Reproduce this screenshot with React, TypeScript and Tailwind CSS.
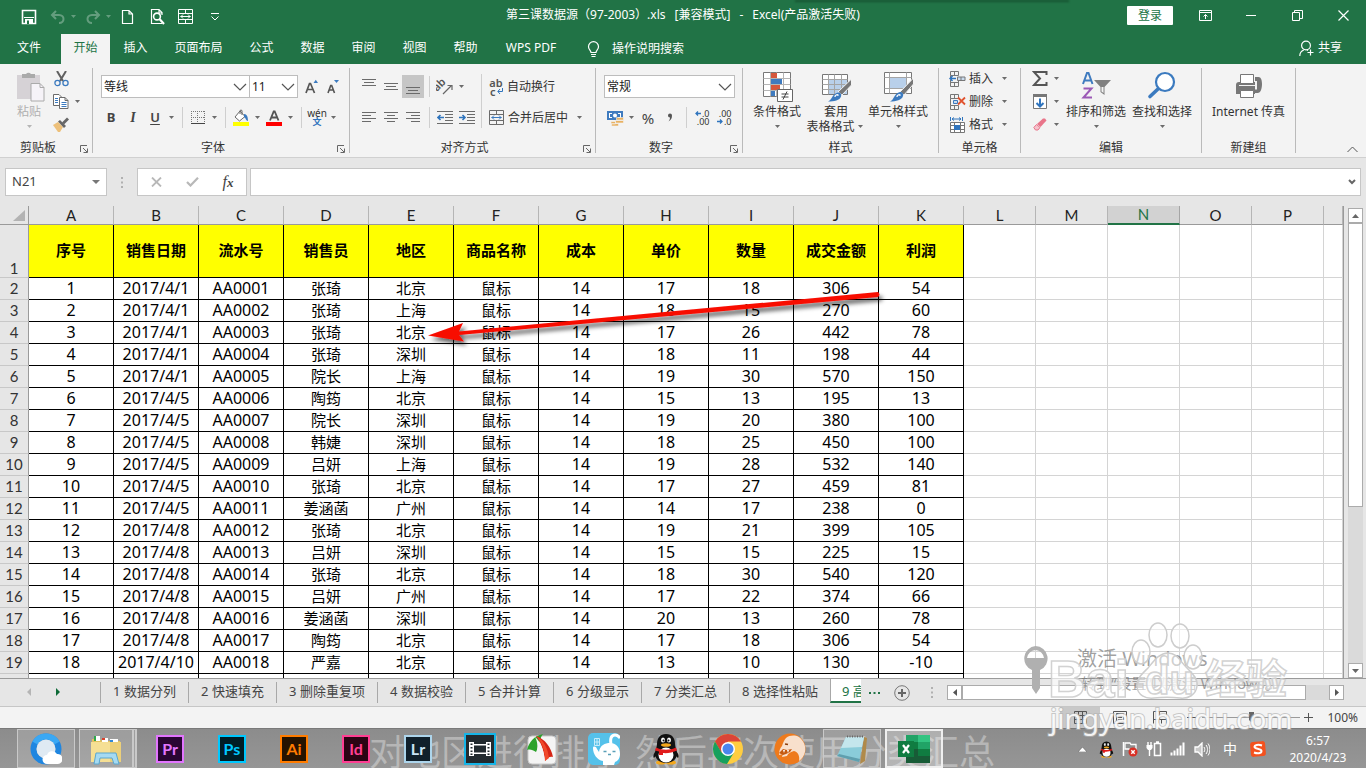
import React from "react";

type Kids = { children?: React.ReactNode };

/* ---------- helpers ---------- */

function Svg({ w, h, children, className = "" }: Kids & { w: number; h: number; className?: string }) {
  return (
    <svg width={w} height={h} viewBox={`0 0 ${w} ${h}`} fill="none" className={`shrink-0 ${className}`} aria-hidden="true">
      {children}
    </svg>
  );
}

function Caret({ light = false }: { light?: boolean }) {
  return (
    <span className="flex w-[11px] shrink-0 items-center justify-center">
      <Svg w={5} h={3}>
        <path d="M0 0h5L2.5 3z" fill={light ? "#b5b5b5" : "#6b6b6b"} />
      </Svg>
    </span>
  );
}

function Sep() {
  return (
    <span className="flex h-[21px] w-[10px] shrink-0 justify-center">
      <span className="w-px bg-[#cfcfcf]" />
    </span>
  );
}

function Cell({ label, active = false, children }: Kids & { label: string; active?: boolean }) {
  return (
    <button
      type="button"
      aria-label={label}
      className={
        active
          ? "flex h-[23px] w-[22px] shrink-0 items-center justify-center bg-[#c6c6c6]"
          : "flex h-[23px] w-[22px] shrink-0 items-center justify-center"
      }
    >
      {children}
    </button>
  );
}

function Combo({ label, value, className }: { label: string; value: string; className: string }) {
  return (
    <span className={`relative flex h-[23px] items-center border border-[#bdbdbd] bg-white ${className}`}>
      <select aria-label={label} className="h-full w-full appearance-none bg-transparent pl-[2px] text-xs text-[#222]">
        <option>{value}</option>
      </select>
      <Svg w={14} h={8} className="pointer-events-none absolute right-[2px]">
        <path d="M1 1l6 6 6-6" stroke="#555" strokeWidth="1.2" />
      </Svg>
    </span>
  );
}

function Group({ name, width, launcher = false, children }: Kids & { name: string; width: string; launcher?: boolean }) {
  return (
    <section aria-label={name} className={`flex shrink-0 ${width}`}>
      <div className="flex min-w-0 flex-1 flex-col">
        <div className="flex h-[74px]">{children}</div>
        <div className="flex h-[19px] items-center">
          <span className="flex-1 text-center">{name}</span>
          {launcher && (
            <button type="button" aria-label={`${name}设置`} className="flex w-4 items-center justify-center pt-[2px]">
              <Svg w={8} h={8}>
                <path d="M.5 7V.5H7M3 3l4 4M7.5 3.5v4h-4" stroke="#666" />
              </Svg>
            </button>
          )}
        </div>
      </div>
      <span className="my-1 w-px bg-[#bababa]" />
    </section>
  );
}

function BigButton({
  icon,
  line1,
  line2,
  caret = true,
  width,
  muted = false,
}: {
  icon: React.ReactNode;
  line1: string;
  line2?: string;
  caret?: boolean;
  width: string;
  muted?: boolean;
}) {
  return (
    <button type="button" className={`flex shrink-0 flex-col items-center whitespace-nowrap pt-[7px] ${width} ${muted ? "text-[#b0b0b0]" : ""}`}>
      <span className="flex h-[33px] items-start justify-center">{icon}</span>
      <span className="leading-[15px]">{line1}</span>
      <span className="flex h-[15px] items-center leading-[15px]">
        {line2}
        {caret && <Caret light={muted} />}
      </span>
    </button>
  );
}

/* ---------- ribbon icons ---------- */

const MergeIcon = ({ color = "#6b6b6b", arrow = "#3b7abf" }: { color?: string; arrow?: string }) => (
  <Svg w={15} h={15}>
    <path d="M.5.500h14v14H.5zM.5 4.500h14M.5 10.500h14M7.500.500v4M7.500 10.500v4" stroke={color} />
    <path d="M2.500 7.500h10M5 5.500l-2 2 2 2M10 5.500l2 2-2 2" stroke={arrow} />
  </Svg>
);

const Lines = ({ rows }: { rows: [number, number, number][] }) => (
  <Svg w={14} h={15}>
    {rows.map(([y, a, b]) => (
      <path key={y} d={`M${a} ${y + 0.5}H${b}`} stroke="#6b6b6b" />
    ))}
  </Svg>
);

const PasteIcon = () => (
  <Svg w={30} h={31} className="ml-1">
    <path d="M1 4h23v24H1z" fill="#d6d2d6" />
    <path d="M6 3h4a3 3 0 0 1 5 0h4v4H6z" fill="#aaa" />
    <path d="M15 12.500h9l4 4V30H15z" fill="#f6f3f8" stroke="#aaa" />
    <path d="M24 12.500v4h4" stroke="#aaa" />
  </Svg>
);

const CutIcon = () => (
  <Svg w={15} h={16}>
    <path d="M3 0l6 10M12 0L6 10" stroke="#606060" strokeWidth="2" />
    <circle cx="3.500" cy="12" r="2.600" stroke="#3b7abf" strokeWidth="1.300" />
    <circle cx="11.500" cy="12" r="2.600" stroke="#3b7abf" strokeWidth="1.300" />
  </Svg>
);

const CopyIcon = () => (
  <Svg w={16} h={15}>
    <path d="M.5.500h5.500L8.500 3v8.500H.5z" fill="#fff" stroke="#6b6b6b" />
    <path d="M6.500 3.500h5.500l3 3v8H6.500z" fill="#fff" stroke="#6b6b6b" />
    <path d="M12 3.500v3h3" stroke="#6b6b6b" />
    <path d="M2 4.500h3M2 6.500h3M2 8.500h3M8.500 8.500h5M8.500 10.500h5M8.500 12.500h5" stroke="#3b7abf" />
  </Svg>
);

const BrushIcon = () => (
  <Svg w={17} h={15}>
    <path d="M0 8l5-3 5 5-3 5H5z" fill="#edc07a" />
    <path d="M5 4.500l2-1.500 6 6-2 2z" fill="#666" />
    <path d="M9 5.500l5-5 2 2-5 5z" fill="#666" />
  </Svg>
);

const CondIcon = () => (
  <Svg w={31} h={31}>
    <path d="M1.500 1.500h27v24h-27z" fill="#fff" stroke="#777" />
    <path d="M8.500 1.500v24M14.500 1.500v24M21.500 1.500v24M1.500 7.500h27M1.500 13.500h27M1.500 19.500h27" stroke="#b5b5b5" />
    <path d="M9 2h6v5H9zM9 14h9v5H9z" fill="#d6573c" />
    <path d="M9 8h11v5H9zM9 20h4v5H9z" fill="#3f7bbf" />
    <path d="M15.500 18.500h15v12h-15z" fill="#fff" stroke="#666" />
    <path d="M19.500 23h7M19.500 26h7M25 20.500l-4 8" stroke="#444" />
  </Svg>
);

const TableFormatIcon = () => (
  <Svg w={31} h={31}>
    <path d="M1.500 3.500h25v20h-25z" fill="#fff" stroke="#777" />
    <path d="M8 9h18v14H8z" fill="#b9d0ea" />
    <path d="M7.500 3.500v20M13.500 3.500v20M20.500 3.500v20M1.500 8.500h25M1.500 13.500h25M1.500 18.500h25" stroke="#a5a5a5" />
    <path d="M30.500 8v6L21 24l-4-3z" fill="#777" stroke="#f3f3f3" />
    <path d="M17 21.500c2 0 4 1.500 3 4-1 4-7 5-13 5 4-1 4-8 10-9z" fill="#3b7abf" />
    <path d="M14 26a2 2 0 0 1 3.500-1.500" stroke="#fff" strokeWidth="1.300" />
  </Svg>
);

const CellStyleIcon = () => (
  <Svg w={31} h={31}>
    <path d="M1.500 1.500h27v21h-27z" fill="#fff" stroke="#777" />
    <path d="M7 7h16v11H7z" fill="#b9d0ea" />
    <path d="M6.500 1.500v21M23.500 1.500v21M1.500 6.500h27M1.500 17.500h27" stroke="#a5a5a5" />
    <path d="M30.500 7v6L21 24l-4-3z" fill="#777" stroke="#f3f3f3" />
    <path d="M17 21c2 0 4 1.500 3 4-1 4-7 5.500-13 5.500 4-1 4-8.500 10-9.500z" fill="#3b7abf" />
    <path d="M14 26a2 2 0 0 1 3.500-1.500" stroke="#fff" strokeWidth="1.300" />
  </Svg>
);

const InsertIcon = () => (
  <Svg w={17} h={16}>
    <path d="M1.500.500h8v4h-8zM5.500.500v4M1.500 11.500h8v4h-8zM5.500 11.500v4M1.500 4.500v3M1.500 9v3M9.500 9v3" stroke="#777" />
    <path d="M8.500 6h7.500v3.500H8.500zM12 6v3.500" fill="#c9dbee" stroke="#777" />
    <path d="M7 7.500H1M3.500 5L1 7.500 3.500 10" stroke="#2f74bd" strokeWidth="1.500" />
  </Svg>
);

const DeleteIcon = () => (
  <Svg w={17} h={16}>
    <path d="M1.500.500h8v4h-8zM5.500.500v4M1.500 11.500h8v4h-8zM5.500 11.500v4M1.500 4.500v7" stroke="#777" />
    <path d="M4.500 6.500h4v3h-4z" fill="#c9dbee" stroke="#3b7abf" />
    <path d="M9 3.500l7 7M16 3.500l-7 7" stroke="#e0532f" strokeWidth="1.800" />
  </Svg>
);

const FormatIcon = () => (
  <Svg w={17} h={16}>
    <path d="M1.500 0v4M13.500 0v4M3 2h9M5 .5L3 2l2 1.500M10 .5L12 2l-2 1.500" stroke="#2f74bd" />
    <path d="M1.500 5.500h14v10h-14zM5.500 5.500v10M11.500 5.500v10M1.500 8.500h14M1.500 12.500h14" fill="#fff" stroke="#777" />
    <path d="M5 8h6v5H5z" fill="#2f74bd" />
  </Svg>
);

const SigmaIcon = () => (
  <Svg w={16} h={15}>
    <path d="M14.500 4V1H2l6 6.500L2 14h12.500v-3" stroke="#555" strokeWidth="2" />
  </Svg>
);

const FillDownIcon = () => (
  <Svg w={14} h={15}>
    <path d="M.5.500h13v14H.5z" fill="#fff" stroke="#777" />
    <path d="M0 0h14v3H0z" fill="#777" />
    <path d="M7 4.500v8M3.500 9L7 12.500 10.500 9" stroke="#2f74bd" strokeWidth="2" />
  </Svg>
);

const EraserIcon = () => (
  <Svg w={14} h={13}>
    <path d="M4 6l6-5.500h2l1.500 2L7.500 9z" fill="#e9758a" />
    <path d="M3.500 6.500l3.500 3-2 2.500H2.500L.8 9.500z" fill="#f5c3cc" stroke="#e9758a" />
  </Svg>
);

const SortIcon = () => (
  <Svg w={31} h={31}>
    <path d="M2 13L6 2h1.500L11.500 13M3.500 9.500h6.500" stroke="#3f7bbf" strokeWidth="2" />
    <path d="M2.500 17.500h8L2.500 26.500h8.500" stroke="#9b59b6" strokeWidth="2" />
    <path d="M13 9h17l-6.500 7v8l-4-3v-5z" fill="#808080" />
    <path d="M20.500 16h2v6l-2-1.500z" fill="#f3f3f3" />
  </Svg>
);

const FindIcon = () => (
  <Svg w={30} h={31}>
    <path d="M11 18L3 25.500" stroke="#3b7abf" strokeWidth="3.600" strokeLinecap="round" />
    <circle cx="18" cy="11" r="9" fill="#fff" stroke="#3b7abf" strokeWidth="2.200" />
  </Svg>
);

const FaxIcon = () => (
  <Svg w={28} h={31}>
    <path d="M1 14c0-2 1-3 3-3h16v12H1z" fill="#777" />
    <path d="M5.500 3.500h13v9h-13z" fill="#fff" stroke="#777" />
    <path d="M4 14.500h17" stroke="#f3f3f3" />
    <path d="M5.500 19.500h13v7h-13z" fill="#fff" stroke="#777" />
    <path d="M20 6h3.500C26 6 27 9 27 13s-1 9-4.500 9H19v-3.500h3V10h-2z" fill="#777" />
  </Svg>
);

/* ---------- title bar ---------- */

function TitleBar() {
  return (
    <header className="grid h-[34px] grid-cols-[1fr_auto_1fr] items-center bg-[#217346] text-xs text-white">
      <div className="flex items-center pb-px pl-[21px]">
        <button type="button" aria-label="保存" className="w-[29px]">
          <Svg w={16} h={16}>
            <path d="M1.500 1.500h13v13h-13z" stroke="#fff" strokeWidth="1.600" />
            <path d="M3 8h10v1H3zM4 10h8v5H4z" fill="#fff" />
            <path d="M6 11.500h2V15H6z" fill="#217346" />
          </Svg>
        </button>
        <button type="button" aria-label="撤消" className="flex w-[35px] items-center gap-[5px] opacity-30">
          <Svg w={16} h={14}>
            <path d="M6 1L2 5l4 4M2 5h7c6 0 6 8 0 8" stroke="#fff" strokeWidth="2" />
          </Svg>
          <Svg w={5} h={3}><path d="M0 0h5L2.500 3z" fill="#fff" /></Svg>
        </button>
        <button type="button" aria-label="恢复" className="flex w-[36px] items-center gap-[5px] opacity-30">
          <Svg w={16} h={14}>
            <path d="M10 1l4 4-4 4M14 5H7c-6 0-6 8 0 8" stroke="#fff" strokeWidth="2" />
          </Svg>
          <Svg w={5} h={3}><path d="M0 0h5L2.500 3z" fill="#fff" /></Svg>
        </button>
        <button type="button" aria-label="新建" className="w-[29px]">
          <Svg w={13} h={16}>
            <path d="M1.500 1.500h6.500l3.500 3.500v9.500h-10zM8 1.500V5h3.500" stroke="#fff" strokeWidth="1.200" />
          </Svg>
        </button>
        <button type="button" aria-label="打印预览" className="w-[28px]">
          <Svg w={16} h={17}>
            <path d="M12 7V4.500L9 1.500H1.500v14H12M9 1.500V5h3" stroke="#fff" strokeWidth="1.200" />
            <circle cx="7" cy="8.500" r="3.400" stroke="#fff" strokeWidth="1.600" />
            <path d="M9.500 11l4.500 5" stroke="#fff" strokeWidth="2.200" />
          </Svg>
        </button>
        <button type="button" aria-label="合并后居中" className="w-[32px]">
          <MergeIcon color="#fff" arrow="#fff" />
        </button>
        <button type="button" aria-label="自定义快速访问工具栏">
          <Svg w={10} h={8}>
            <path d="M1 .5h8M1.500 3.500L5 7l3.500-3.500" stroke="#fff" />
          </Svg>
        </button>
      </div>
      <h1 className="flex gap-[9px] whitespace-nowrap pb-1 font-normal">
        <span>第三课数据源（97-2003）.xls</span>
        <span>[兼容模式]</span>
        <span>-</span>
        <span>Excel(产品激活失败)</span>
      </h1>
      <div className="flex items-center justify-end pb-[3px]">
        <button type="button" className="mr-[9px] h-[19px] w-[46px] rounded-[1px] bg-white leading-[19px] text-[#217346]">登录</button>
        <button type="button" aria-label="功能区显示选项" className="flex w-[46px] justify-center">
          <Svg w={13} h={11}>
            <path d="M.5.500h12v10H.5zM.5 2.500h12M6.500 9V4.500M4.500 6.500l2-2 2 2" stroke="#fff" />
          </Svg>
        </button>
        <button type="button" aria-label="最小化" className="flex w-[46px] justify-center">
          <Svg w={10} h={2}><path d="M0 .5h10" stroke="#fff" /></Svg>
        </button>
        <button type="button" aria-label="还原" className="flex w-[46px] justify-center">
          <Svg w={11} h={11}><path d="M.5 2.500h7v8h-7zM2.500 2.500v-2h8v8h-3" stroke="#fff" /></Svg>
        </button>
        <button type="button" aria-label="关闭" className="flex w-[46px] justify-center">
          <Svg w={11} h={11}><path d="M.5.500l10 10M10.500.500l-10 10" stroke="#fff" strokeWidth="1.200" /></Svg>
        </button>
      </div>
    </header>
  );
}

function RibbonTabs() {
  const tabs: [string, string][] = [
    ["插入", "w-[51px]"],
    ["页面布局", "w-[75px]"],
    ["公式", "w-[51px]"],
    ["数据", "w-[51px]"],
    ["审阅", "w-[51px]"],
    ["视图", "w-[51px]"],
    ["帮助", "w-[51px]"],
    ["WPS PDF", "w-[80px]"],
  ];
  return (
    <nav className="flex h-[30px] items-stretch bg-[#217346] text-xs text-white">
      <button type="button" className="mr-[3px] w-[58px] pb-[2px]">文件</button>
      <button type="button" className="w-[49px] bg-[#f3f3f3] pb-[2px] text-[#217346]">开始</button>
      {tabs.map(([t, w]) => (
        <button key={t} type="button" className={`${w} pb-[2px]`}>{t}</button>
      ))}
      <button type="button" className="ml-4 flex items-center gap-3">
        <Svg w={13} h={17}>
          <path d="M4 11.500C4 9.500 1.500 8.500 1.500 5.700a5 5 0 0 1 10 0c0 2.800-2.500 3.800-2.500 5.800zM4 13.500h5M4.500 15.500h4" stroke="#fff" strokeWidth="1.200" />
        </Svg>
        操作说明搜索
      </button>
      <button type="button" className="ml-auto mr-6 flex items-center gap-1 pb-[2px]">
        <Svg w={15} h={17}>
          <circle cx="7" cy="5.500" r="4.400" stroke="#fff" strokeWidth="1.200" />
          <path d="M.8 16c0-3 1.500-5 4-6M8 10l1 .5M11.500 9.500v6M8.500 12.500h6" stroke="#fff" strokeWidth="1.200" />
        </Svg>
        共享
      </button>
    </nav>
  );
}

/* ---------- ribbon ---------- */

function Ribbon() {
  return (
    <div className="flex h-[94px] border-b border-[#d0d0d0] bg-[#f3f3f3] text-xs text-[#333]">
      <Group name="剪贴板" width="w-[93px]" launcher>
        <div className="flex pl-[10px]">
          <BigButton width="w-[38px]" icon={<PasteIcon />} line1="粘贴" muted />
          <div className="flex flex-col pl-[2px] pt-[3px]">
            <Cell label="剪切"><CutIcon /></Cell>
            <span className="flex items-center">
              <Cell label="复制"><CopyIcon /></Cell>
              <Caret />
            </span>
            <Cell label="格式刷"><BrushIcon /></Cell>
          </div>
        </div>
      </Group>

      <Group name="字体" width="w-[257px]" launcher>
        <div className="flex flex-col gap-2 pl-[7px] pt-[11px]">
          <div className="flex items-center pl-px">
            <Combo label="字体" value="等线" className="w-[149px]" />
            <Combo label="字号" value="11" className="-ml-px w-[49px]" />
            <span className="w-[2px]" />
            <Cell label="增大字号">
              <Svg w={13} h={15}>
                <path d="M1 14L4.500 4.500h1L9.500 14M2.500 10.500h6" stroke="#555" strokeWidth="1.700" />
                <path d="M8.500 4h4.500L10.800.800z" fill="#3b7abf" />
              </Svg>
            </Cell>
            <Cell label="减小字号">
              <Svg w={12} h={15}>
                <path d="M1 14l2.700-7.500h1L7.500 14M2 11h5" stroke="#555" strokeWidth="1.600" />
                <path d="M7 1h5L9.500 4z" fill="#3b7abf" />
              </Svg>
            </Cell>
          </div>
          <div className="flex items-center">
            <Cell label="加粗"><b className="text-[13px] text-[#444]">B</b></Cell>
            <Cell label="倾斜"><i className="font-['Liberation_Serif',serif] text-sm font-bold text-[#444]">I</i></Cell>
            <Cell label="下划线"><u className="text-[13px] font-semibold text-[#444] underline-offset-2">U</u></Cell>
            <Caret />
            <Sep />
            <Cell label="边框">
              <Svg w={14} h={13}>
                <path d="M.5 0v13M6.500 0v13M13.500 0v13M0 .5h14M0 6.500h14" stroke="#777" strokeDasharray="1 1" />
                <path d="M0 12.500h14" stroke="#444" />
              </Svg>
            </Cell>
            <Caret />
            <Sep />
            <Cell label="填充颜色">
              <Svg w={16} h={17}>
                <path d="M7 2L2 8l4.500 4L12 7.500zM7 5V1.500a1.500 1.500 0 0 1 2 0V6" fill="#fff" stroke="#6b6b6b" />
                <path d="M11 5c3 0 4 3 4 7-2 0-2-3-4-4z" fill="#3b7abf" />
                <path d="M0 13h16v4H0z" fill="#ff0" />
              </Svg>
            </Cell>
            <Caret />
            <Cell label="字体颜色">
              <Svg w={16} h={17}>
                <path d="M4 11.500l3.700-9h1l3.800 9M5.500 8.500h5.500" stroke="#555" strokeWidth="1.800" />
                <path d="M0 13h16v4H0z" fill="#f00" />
              </Svg>
            </Cell>
            <Caret />
            <Sep />
            <Cell label="拼音指南">
              <span className="flex flex-col items-center text-[10px] leading-[8px]">
                <span>wén</span>
                <span className="text-[9px] font-bold leading-[9px] text-[#2f74bd]">文</span>
              </span>
            </Cell>
            <Caret />
          </div>
        </div>
      </Group>

      <Group name="对齐方式" width="w-[246px]" launcher>
        <div className="flex flex-col gap-2 pl-2 pt-[11px]">
          <div className="flex items-center">
            <Cell label="顶端对齐"><Lines rows={[[0, 0, 14], [3, 2, 12], [6, 0, 14]]} /></Cell>
            <Cell label="垂直居中"><Lines rows={[[4, 0, 14], [7, 2, 12], [10, 0, 14]]} /></Cell>
            <Cell label="底端对齐" active><Lines rows={[[8, 0, 14], [11, 2, 12], [14, 0, 14]]} /></Cell>
            <Sep />
            <Cell label="方向">
              <Svg w={18} h={17}>
                <text x="0" y="12" transform="rotate(-45 3 12)" fontSize="11" fontWeight="600" fill="#555" fontFamily="Noto Sans">ab</text>
                <path d="M7 16l8-8M11.500 7.500H16V12" stroke="#666" strokeWidth="1.200" />
              </Svg>
            </Cell>
            <Caret />
          </div>
          <div className="flex items-center">
            <Cell label="左对齐"><Lines rows={[[2, 0, 14], [5, 0, 9], [8, 0, 14], [11, 0, 9]]} /></Cell>
            <Cell label="居中"><Lines rows={[[2, 0, 14], [5, 3, 11], [8, 0, 14], [11, 3, 11]]} /></Cell>
            <Cell label="右对齐"><Lines rows={[[2, 0, 14], [5, 5, 14], [8, 0, 14], [11, 5, 14]]} /></Cell>
            <Sep />
            <Cell label="减少缩进量">
              <Svg w={16} h={13}>
                <path d="M0 .5h16M8 3.500h8M8 6.500h8M8 9.500h8M0 12.500h16" stroke="#6b6b6b" />
                <path d="M7 6.500H1M3.500 4L1 6.500 3.500 9" stroke="#2f74bd" strokeWidth="1.600" />
              </Svg>
            </Cell>
            <Cell label="增加缩进量">
              <Svg w={16} h={13}>
                <path d="M0 .5h16M8 3.500h8M8 6.500h8M8 9.500h8M0 12.500h16" stroke="#6b6b6b" />
                <path d="M0 6.500h6M3.500 4L6 6.500 3.500 9" stroke="#2f74bd" strokeWidth="1.600" />
              </Svg>
            </Cell>
          </div>
        </div>
        <span className="mx-[3px] mt-[10px] h-[54px] w-px bg-[#cfcfcf]" />
        <div className="flex flex-col gap-2 pl-1 pt-[11px]">
          <button type="button" className="flex h-[23px] items-center gap-1">
            <span className="flex w-[14px] flex-col text-[11px] font-semibold leading-[9px] text-[#555]">
              <span className="text-center">ab</span>
              <span className="flex items-center gap-px pl-px">
                c
                <Svg w={6} h={6}>
                  <path d="M5.500 0v3.500H1M3 1L.800 3.500 3 6" stroke="#2f74bd" />
                </Svg>
              </span>
            </span>
            自动换行
          </button>
          <button type="button" className="flex h-[23px] items-center gap-1">
            <MergeIcon />
            <span className="mr-[2px]">合并后居中</span>
            <Caret />
          </button>
        </div>
      </Group>

      <Group name="数字" width="w-[147px]" launcher>
        <div className="flex flex-1 flex-col gap-2 pl-2 pr-2 pt-[11px]">
          <Combo label="数字格式" value="常规" className="w-full" />
          <div className="flex items-center">
            <Cell label="会计数字格式">
              <Svg w={17} h={16}>
                <path d="M0 1h16v9H0z" fill="#3f7bbf" />
                <path d="M2 3h3v1H3v3h2v1H2zM14 3h-3v1h2v3h-2v1h3z" fill="#fff" />
                <circle cx="8" cy="5.500" r="2" fill="#fff" />
                <path d="M9.500 7.500h7V10h-7zM8.500 10.500h8V13h-8zM4 11.500h4.500V14H4zM4.500 13.500h7V16h-7z" fill="#e8b162" stroke="#f3f3f3" strokeWidth=".6" />
              </Svg>
            </Cell>
            <Caret />
            <Cell label="百分比样式"><span className="text-[15px] text-[#444]">%</span></Cell>
            <Cell label="千位分隔样式">
              <Svg w={6} h={9}><path d="M1 2.500a2 2 0 1 1 4 0c0 3-1 4.500-3.500 6 1-1.500 1.500-2.500 1.500-4C1.800 4.500 1 3.500 1 2.500z" fill="#555" /></Svg>
            </Cell>
            <Sep />
            <Cell label="增加小数位数">
              <span className="flex w-[15px] flex-col items-end text-[9px] leading-[8px] text-[#333]">
                <span className="flex items-center gap-px">
                  <Svg w={6} h={5}><path d="M6 2.500H1M3 .5l-2 2 2 2" stroke="#2f74bd" strokeWidth="1.300" /></Svg>
                  .0
                </span>
                <span>.00</span>
              </span>
            </Cell>
            <Cell label="减少小数位数">
              <span className="flex w-[15px] flex-col items-end text-[9px] leading-[8px] text-[#333]">
                <span>.00</span>
                <span className="flex items-center gap-px">
                  <Svg w={6} h={5}><path d="M0 2.500h5M3 .5l2 2-2 2" stroke="#2f74bd" strokeWidth="1.300" /></Svg>
                  .0
                </span>
              </span>
            </Cell>
          </div>
        </div>
      </Group>

      <Group name="样式" width="w-[196px]">
        <div className="flex pl-[5px]">
          <BigButton width="w-[58px]" icon={<CondIcon />} line1="条件格式" />
          <BigButton width="w-[60px]" icon={<TableFormatIcon />} line1="套用" line2="表格格式" />
          <BigButton width="w-[64px]" icon={<CellStyleIcon />} line1="单元格样式" />
        </div>
      </Group>

      <Group name="单元格" width="w-[82px]">
        <div className="flex flex-col pl-[10px] pt-[3px]">
          {[
            ["插入", <InsertIcon key="i" />],
            ["删除", <DeleteIcon key="d" />],
            ["格式", <FormatIcon key="f" />],
          ].map(([t, icon]) => (
            <button key={t as string} type="button" className="flex h-[23px] items-center gap-[3px]">
              {icon}
              <span className="mr-[3px]">{t}</span>
              <Caret />
            </button>
          ))}
        </div>
      </Group>

      <Group name="编辑" width="w-[181px]">
        <div className="flex flex-col pl-2 pt-[3px]">
          <span className="flex items-center"><Cell label="自动求和"><SigmaIcon /></Cell><Caret /></span>
          <span className="flex items-center"><Cell label="填充"><FillDownIcon /></Cell><Caret /></span>
          <span className="flex items-center"><Cell label="清除"><EraserIcon /></Cell><Caret /></span>
        </div>
        <BigButton width="w-[68px]" icon={<SortIcon />} line1="排序和筛选" />
        <BigButton width="w-[64px]" icon={<FindIcon />} line1="查找和选择" />
      </Group>

      <Group name="新建组" width="w-[94px]">
        <div className="flex flex-1 justify-center">
          <BigButton width="w-[80px]" icon={<FaxIcon />} line1="Internet 传真" caret={false} />
        </div>
      </Group>

      <button type="button" aria-label="折叠功能区" className="mb-1 ml-auto mr-2 self-end">
        <Svg w={11} h={7}><path d="M.5 6l5-5 5 5" stroke="#555" /></Svg>
      </button>
    </div>
  );
}

/* ---------- formula bar ---------- */

function FormulaBar() {
  return (
    <div className="flex h-12 items-start bg-[#e6e6e6] pl-[5px] pr-[5px] pt-[10px] text-xs text-[#444]">
      <div className="flex h-[28px] w-[102px] items-center border border-[#c6c6c6] bg-white pr-[6px]">
        <input aria-label="名称框" defaultValue="N21" className="min-w-0 flex-1 bg-transparent pl-[6px] text-[13px]" />
        <Svg w={8} h={4}><path d="M0 0h8L4 4z" fill="#777" /></Svg>
      </div>
      <span className="flex h-[28px] w-[30px] items-center justify-center">
        <Svg w={2} h={11}><path d="M0 0h2v2H0zM0 4.500h2v2H0zM0 9h2v2H0z" fill="#b0b0b0" /></Svg>
      </span>
      <div className="flex h-[28px] w-[110px] items-center border border-[#c6c6c6] bg-white">
        <button type="button" aria-label="取消" className="flex flex-1 justify-center">
          <Svg w={11} h={10}><path d="M1 .5l9 9M10 .5l-9 9" stroke="#b8b8b8" strokeWidth="1.800" /></Svg>
        </button>
        <button type="button" aria-label="输入" className="flex flex-1 justify-center">
          <Svg w={13} h={10}><path d="M1 5l3.500 3.500L12 .8" stroke="#b8b8b8" strokeWidth="2.200" /></Svg>
        </button>
        <button type="button" aria-label="插入函数" className="flex-1 font-['Liberation_Serif',serif] text-base italic leading-none text-[#444]">
          f<span className="text-[13px] font-bold">x</span>
        </button>
      </div>
      <div className="ml-[3px] flex h-[28px] flex-1 items-center border border-[#c6c6c6] bg-white pr-1">
        <input aria-label="编辑栏" className="min-w-0 flex-1 bg-transparent px-2" />
        <Svg w={8} h={6}><path d="M1 1l3 3 3-3" stroke="#666" strokeWidth="2" /></Svg>
      </div>
    </div>
  );
}

/* ---------- worksheet ---------- */

const dataCols = ["A", "B", "C", "D", "E", "F", "G", "H", "I", "J", "K"];
const restCols = ["L", "M", "N", "O", "P", ""];
const heads = ["序号", "销售日期", "流水号", "销售员", "地区", "商品名称", "成本", "单价", "数量", "成交金额", "利润"];

const records: [string, string, string, number, number, number, number][] = [
  ["2017/4/1", "张琦", "北京", 17, 18, 306, 54],
  ["2017/4/1", "张琦", "上海", 18, 15, 270, 60],
  ["2017/4/1", "张琦", "北京", 17, 26, 442, 78],
  ["2017/4/1", "张琦", "深圳", 18, 11, 198, 44],
  ["2017/4/1", "院长", "上海", 19, 30, 570, 150],
  ["2017/4/5", "陶筠", "北京", 15, 13, 195, 13],
  ["2017/4/5", "院长", "深圳", 19, 20, 380, 100],
  ["2017/4/5", "韩婕", "深圳", 18, 25, 450, 100],
  ["2017/4/5", "吕妍", "上海", 19, 28, 532, 140],
  ["2017/4/5", "张琦", "北京", 17, 27, 459, 81],
  ["2017/4/5", "姜涵菡", "广州", 14, 17, 238, 0],
  ["2017/4/8", "张琦", "北京", 19, 21, 399, 105],
  ["2017/4/8", "吕妍", "深圳", 15, 15, 225, 15],
  ["2017/4/8", "张琦", "北京", 18, 30, 540, 120],
  ["2017/4/8", "吕妍", "广州", 17, 22, 374, 66],
  ["2017/4/8", "姜涵菡", "深圳", 20, 13, 260, 78],
  ["2017/4/8", "陶筠", "北京", 17, 18, 306, 54],
  ["2017/4/10", "严嘉", "北京", 13, 10, 130, -10],
];

const rowHead = "border-b border-r border-b-[#c8c8c8] border-r-[#9a9a9a] bg-[#e6e6e6] p-0 text-center font-['Lato',sans-serif] font-normal text-[#333]";
const blank = "border-b border-r border-[#d4d4d4] bg-white p-0";

function Num({ v }: { v: string | number }) {
  return <td className="whitespace-nowrap border-b border-r border-black bg-white p-0 text-center text-base leading-[21px]">{v}</td>;
}
function Txt({ v }: { v: string }) {
  return <td className="border-b border-r border-black bg-white p-0 text-center leading-[21px]">{v}</td>;
}

function Sheet() {
  return (
    <div className="flex min-h-0 flex-1 bg-[#e6e6e6]">
      <div className="relative min-w-0 flex-1 overflow-hidden border-r border-[#9a9a9a]">
        <table className="w-full table-fixed border-separate border-spacing-0 text-[15px] text-black">
          <colgroup>
            <col className="w-[29px]" />
            {dataCols.map((c) => <col key={c} className="w-[85px]" />)}
            {restCols.slice(0, 5).map((c) => <col key={c} className="w-[72px]" />)}
            <col />
          </colgroup>
          <thead>
            <tr className="h-[19px] font-['Lato',sans-serif] text-[#222]">
              <th className="border-b border-r border-[#9a9a9a] bg-[#e6e6e6] p-0" aria-label="全选">
                <Svg w={12} h={11} className="ml-auto mr-[3px]"><path d="M12 0v11H0z" fill="#b3b3b3" /></Svg>
              </th>
              {[...dataCols, ...restCols].map((c) => (
                <th
                  key={c}
                  scope="col"
                  className={
                    c === "N"
                      ? "border-b-2 border-r border-b-[#217346] border-r-[#a5a5a5] bg-[#d2d2d2] p-0 font-normal leading-[17px] text-[#217346]"
                      : "border-b border-r border-b-[#9a9a9a] border-r-[#b5b5b5] bg-[#e6e6e6] p-0 font-normal leading-[18px]"
                  }
                >
                  {c}
                </th>
              ))}
            </tr>
          </thead>
          <tbody>
            <tr className="h-[53px]">
              <th scope="row" className={`${rowHead} align-bottom leading-[17px]`}>1</th>
              {heads.map((h) => (
                <td key={h} className="border-b border-r border-black bg-[#ffff00] p-0 pb-[2px] text-center font-bold">{h}</td>
              ))}
              {restCols.map((c) => <td key={c} className={blank} />)}
            </tr>
            {records.map(([date, who, area, price, qty, total, profit], i) => (
              <tr key={i} className="h-[22px]">
                <th scope="row" className={`${rowHead} leading-[21px]`}>{i + 2}</th>
                <Num v={i + 1} />
                <Num v={date} />
                <Num v={`AA${String(i + 1).padStart(4, "0")}`} />
                <Txt v={who} />
                <Txt v={area} />
                <Txt v="鼠标" />
                <Num v={14} />
                <Num v={price} />
                <Num v={qty} />
                <Num v={total} />
                <Num v={profit} />
                {restCols.map((c) => <td key={c} className={blank} />)}
              </tr>
            ))}
            <tr className="h-[22px]">
              <th scope="row" aria-label="20" className={rowHead} />
              {dataCols.map((c) => <td key={c} className="border-b border-r border-black bg-white p-0" />)}
              {restCols.map((c) => <td key={c} className={blank} />)}
            </tr>
          </tbody>
        </table>
        <svg width="480" height="70" viewBox="420 280 480 70" className="pointer-events-none absolute left-[420px] top-[74px]" aria-hidden="true">
          <defs>
            <filter id="drop" x="-5%" y="-30%" width="112%" height="180%">
              <feDropShadow dx="3" dy="4" stdDeviation="2" floodColor="#000" floodOpacity="0.6" />
            </filter>
          </defs>
          <path d="M428 335.500L463 323l-4 8.500L878 292q3 2.500 0 5L459 335l5 6.500z" fill="#f80a06" filter="url(#drop)" />
        </svg>
      </div>
      <div className="flex w-[22px] flex-col items-stretch pl-[4px] pr-[3px] pt-[2px]">
        <button type="button" aria-label="向上滚动" className="flex h-[15px] items-center justify-center border border-[#ababab] bg-white">
          <Svg w={7} h={4}><path d="M0 4h7L3.500 0z" fill="#666" /></Svg>
        </button>
        <div className="flex-[284] border border-[#ababab] bg-white" />
        <div className="flex-[157] bg-[#dadada]" />
        <button type="button" aria-label="向下滚动" className="flex h-[15px] items-center justify-center border border-[#ababab] bg-white">
          <Svg w={7} h={4}><path d="M0 0h7L3.500 4z" fill="#666" /></Svg>
        </button>
      </div>
    </div>
  );
}

function SheetTabs() {
  const tabs: [string, string][] = [
    ["1 数据分列", "w-[88px]"],
    ["2 快速填充", "w-[88px]"],
    ["3 删除重复项", "w-[101px]"],
    ["4 数据校验", "w-[88px]"],
    ["5 合并计算", "w-[88px]"],
    ["6 分级显示", "w-[88px]"],
    ["7 分类汇总", "w-[88px]"],
    ["8 选择性粘贴", "w-[101px]"],
  ];
  return (
    <div className="flex h-[29px] border-b border-t border-b-[#c6c6c6] border-t-[#9a9a9a] bg-[#e6e6e6] text-[13px] text-[#444]">
      <div className="flex w-[100px] items-center gap-[25px] pb-[2px] pl-[27px]">
        <button type="button" aria-label="上一个工作表"><Svg w={4} h={8}><path d="M4 0v8L0 4z" fill="#b5b5b5" /></Svg></button>
        <button type="button" aria-label="下一个工作表"><Svg w={4} h={8}><path d="M0 0v8l4-4z" fill="#0e6b38" /></Svg></button>
      </div>
      {tabs.map(([t, w]) => (
        <button key={t} type="button" className={`${w} my-[3px] flex shrink-0 items-start justify-center whitespace-nowrap border-l border-[#a8a8a8] leading-[18px]`}>{t}</button>
      ))}
      <button type="button" className="mb-[3px] flex w-[31px] shrink-0 overflow-hidden whitespace-nowrap border-b-2 border-l border-b-[#217346] border-l-[#a8a8a8] bg-white pl-[11px] pt-[3px] leading-[18px] text-[#217346]">
        9 高级筛选
      </button>
      <button type="button" aria-label="更多工作表" className="flex w-[27px] items-center justify-center">
        <Svg w={11} h={2}><path d="M0 0h2v2H0zM4.500 0h2v2h-2zM9 0h2v2H9z" fill="#217346" /></Svg>
      </button>
      <button type="button" aria-label="新工作表" className="flex w-[28px] items-center justify-center">
        <Svg w={16} h={16}>
          <circle cx="8" cy="8" r="7.300" stroke="#777" />
          <path d="M4 8h8M8 4v8" stroke="#666" strokeWidth="2" />
        </Svg>
      </button>
      <span className="flex w-[31px] items-center justify-center">
        <Svg w={2} h={11}><path d="M0 0h2v2H0zM0 4.500h2v2H0zM0 9h2v2H0z" fill="#b0b0b0" /></Svg>
      </span>
      <div className="mr-[22px] mt-[6px] flex h-[15px] flex-1">
        <button type="button" aria-label="向左滚动" className="flex w-[15px] items-center justify-center border border-[#ababab] bg-white">
          <Svg w={4} h={7}><path d="M4 0v7L0 3.500z" fill="#555" /></Svg>
        </button>
        <div className="flex-[344] border border-[#ababab] bg-white" />
        <div className="flex-[23] bg-[#dadada]" />
        <button type="button" aria-label="向右滚动" className="flex w-[15px] items-center justify-center border border-[#ababab] bg-white">
          <Svg w={4} h={7}><path d="M0 0v7l4-3.500z" fill="#555" /></Svg>
        </button>
      </div>
    </div>
  );
}

function StatusBar() {
  return (
    <div className="flex h-[21px] items-center justify-end bg-[#f3f3f3] pr-2 text-xs text-[#444]">
      <button type="button" aria-label="普通" className="flex h-full w-10 items-center justify-center bg-[#c8c8c8]">
        <Svg w={13} h={13}><path d="M.5.500h12v12H.5zM4.500.500v12M8.500.500v12M.5 4.500h12M.5 8.500h12" stroke="#555" /></Svg>
      </button>
      <button type="button" aria-label="页面布局" className="flex w-10 items-center justify-center">
        <Svg w={14} h={13}><path d="M.5.500h13v12H.5zM3.500 2.500h7v8h-7zM5 4.500h4M5 6.500h4M5 8.500h4" stroke="#555" /></Svg>
      </button>
      <button type="button" aria-label="分页预览" className="flex w-10 items-center justify-center">
        <Svg w={14} h={13}><path d="M.5.500h6v8h-6zM6.500.500h7v8h-7zM.5 8v4.500M13.500 8v4.500M5.500 12.500v-4M8.500 12.500v-4" stroke="#555" /></Svg>
      </button>
      <button type="button" aria-label="缩小" className="flex w-[22px] items-center justify-center">
        <Svg w={9} h={1}><path d="M0 .5h9" stroke="#555" /></Svg>
      </button>
      <Svg w={98} h={13}>
        <path d="M0 6.500h98" stroke="#9a9a9a" />
        <path d="M47 1h5v8l-2.500 2.500L47 9z" fill="#666" />
      </Svg>
      <button type="button" aria-label="放大" className="flex w-[17px] items-center justify-center">
        <Svg w={9} h={9}><path d="M0 4.500h9M4.500 0v9" stroke="#555" /></Svg>
      </button>
      <span className="ml-[10px]">100%</span>
    </div>
  );
}

/* ---------- taskbar ---------- */

function Adobe({ label, box }: { label: string; box: string }) {
  return (
    <span className={`flex h-[28px] w-[28px] items-center justify-center border-2 font-['Lato',sans-serif] text-base font-bold leading-none ${box}`}>
      {label}
    </span>
  );
}

function Penguin({ size }: { size: number }) {
  return (
    <svg width={size} height={size} viewBox="0 0 32 32" aria-hidden="true">
      <path d="M6 18c-3 3-3 6-2 7l3-3zM26 18c3 3 3 6 2 7l-3-3z" fill="#111" />
      <ellipse cx="11" cy="29.500" rx="5" ry="2" fill="#f4a81d" />
      <ellipse cx="21" cy="29.500" rx="5" ry="2" fill="#f4a81d" />
      <path d="M16 1c-6 0-9 4-9 10 0 3-2 6-2 10 0 5 5 9 11 9s11-4 11-9c0-4-2-7-2-10 0-6-3-10-9-10z" fill="#111" />
      <ellipse cx="16" cy="22" rx="7.500" ry="7.500" fill="#fff" />
      <ellipse cx="13" cy="7" rx="2" ry="2.600" fill="#fff" />
      <ellipse cx="19" cy="7" rx="2" ry="2.600" fill="#fff" />
      <circle cx="13.500" cy="7.500" r="1" fill="#111" />
      <circle cx="18.500" cy="7.500" r="1" fill="#111" />
      <ellipse cx="16" cy="12" rx="5" ry="1.800" fill="#f4a81d" />
      <path d="M6 14.500c6 3 14 3 20 0l1 3c-4 2-10 3-14 2.500V22H9v-3.500L5 17.500z" fill="#e11b1b" />
    </svg>
  );
}

function TaskButton({ label, state = "idle", children }: Kids & { label: string; state?: "idle" | "open" | "stack" | "active" }) {
  const look = {
    idle: "border border-transparent",
    open: "border border-[#c9c9c9] bg-white/15",
    stack: "border border-r-[5px] border-double border-[#c9c9c9] bg-white/15",
    active: "border-2 border-[#efefef] bg-white/30",
  }[state];
  return (
    <button type="button" aria-label={label} className={`flex h-[39px] w-[58px] shrink-0 items-center justify-center ${look}`}>
      {children}
    </button>
  );
}

function Taskbar() {
  return (
    <footer className="relative flex h-10 items-start justify-between overflow-hidden border-t border-[#7a7a7a] bg-linear-to-b from-[#8c8c8c] to-[#969696] pl-[17px]">
      <p className="pointer-events-none absolute left-[369px] top-0 flex gap-[14px] whitespace-nowrap text-[36px] leading-[48px] text-white/35">
        <span>对地区进行排序</span>
        <span>然后再次使用分类汇总</span>
      </p>
      <div className="relative flex gap-1">
        <TaskButton label="QQ浏览器" state="open">
          <Svg w={32} h={32}>
            <circle cx="16" cy="16" r="12.500" stroke="#1f86e0" strokeWidth="6" />
            <path d="M5 10A12.500 12.500 0 0 1 27 10" stroke="#3aa8f4" strokeWidth="6" />
            <circle cx="16" cy="16" r="9.500" fill="#dfeaf3" />
            <path d="M17 31a4.500 4.500 0 0 1 0-9 5.500 5.500 0 0 1 10-1 5 5 0 0 1 1 10z" fill="#fff" />
          </Svg>
        </TaskButton>
        <TaskButton label="资源管理器" state="stack">
          <Svg w={32} h={32}>
            <path d="M2 6h8l2 2h18v20H2z" fill="#e3c25d" />
            <path d="M4 3h6v5H4z" fill="#2fa84c" />
            <path d="M6 3h4v5H6z" fill="#fff" />
            <path d="M12 5h6v4h-6z" fill="#fff" />
            <path d="M12 5h3v2h-3z" fill="#d9402c" />
            <path d="M20 6h8v3h-8z" fill="#fff" />
            <path d="M20 7h3v2h-3z" fill="#3287d6" />
            <path d="M1 9h30v20H1z" fill="#f5df94" />
            <path d="M20 9h11v20H20z" fill="#ecd07a" />
            <path d="M6 20h20l3 11h-5l-2-6H10l-1 6H4z" fill="#a5daf2" stroke="#5aa7cf" />
          </Svg>
        </TaskButton>
        <TaskButton label="Premiere"><Adobe label="Pr" box="border-[#e276ff] bg-[#2a0634] text-[#e276ff]" /></TaskButton>
        <TaskButton label="Photoshop"><Adobe label="Ps" box="border-[#00c8ff] bg-[#001d26] text-[#00c8ff]" /></TaskButton>
        <TaskButton label="Illustrator"><Adobe label="Ai" box="border-[#ff7c00] bg-[#261300] text-[#ff7c00]" /></TaskButton>
        <TaskButton label="InDesign"><Adobe label="Id" box="border-[#ff3f93] bg-[#2b0414] text-[#ff3f93]" /></TaskButton>
        <TaskButton label="Lightroom"><Adobe label="Lr" box="border-[#add5ec] bg-[#10202b] text-[#c9e4f5]" /></TaskButton>
        <TaskButton label="视频工具">
          <Svg w={32} h={32}>
            <path d="M1 1h30v30H1z" fill="#222a2f" stroke="#16b5e8" strokeWidth="2" />
            <path d="M5 9h5v14H5zM22 9h5v14h-5zM10 11h12v1.500H10zM10 19.500h12V21H10z" fill="#fff" />
            <path d="M6.500 10.500h2v1.500h-2zM6.500 14h2v1.500h-2zM6.500 17.500h2V19h-2zM6.500 20.500h2V22h-2zM23.500 10.500h2v1.500h-2zM23.500 14h2v1.500h-2zM23.500 17.500h2V19h-2zM23.500 20.500h2V22h-2z" fill="#222a2f" />
          </Svg>
        </TaskButton>
        <TaskButton label="录屏软件">
          <Svg w={32} h={32}>
            <rect x="2" y="3" width="28" height="28" rx="4" fill="#f4f4f4" stroke="#c9c9c9" />
            <path d="M1 17C3 9 8 3 17 1c-3 3-4 12-7 18-3-2-6-3-9-2z" fill="#2ba32a" />
            <path d="M10 3c9 3 15 11 17 21-3-1-6 1-8 4-1-10-4-19-9-25z" fill="#d62516" />
            <path d="M9 4c6 5 9 14 10 24-2-3-5-5-9-5 2-7 2-14-1-19z" fill="#f4f4f4" />
            <path d="M10 3c6 6 9 15 9 25l4-3C22 16 18 7 10 3z" fill="#f0492b" />
          </Svg>
        </TaskButton>
        <TaskButton label="云盘">
          <Svg w={32} h={32}>
            <rect width="32" height="32" rx="5" fill="#55c1ea" />
            <path d="M23 11c-1-5 0-9 4-9 3 0 4 2 5 3" stroke="#fff" strokeWidth="3" />
            <path d="M6.500 5.500h5v7h-5zM6.500 9h5M9 5.500v7" stroke="#c7ecf9" />
            <path d="M5 15c0-2 3-2 4 1l2 3c1-7 6-9 11-9 6 0 10 4 10 11 0 4-2 7-5 8l-1 3H15v-4C9 27 5 21 5 15z" fill="#fff" />
            <path d="M15.500 18.500h3M24.500 18.500h3M20 21.500h3" stroke="#5a9fb8" strokeWidth="1.300" />
          </Svg>
        </TaskButton>
        <TaskButton label="QQ"><Penguin size={32} /></TaskButton>
        <TaskButton label="Chrome">
          <Svg w={32} h={32}>
            <circle cx="16" cy="16" r="15" fill="#ffcd41" />
            <path d="M3 8.500A15 15 0 0 1 29 8.500H16L9.500 20z" fill="#db4437" />
            <path d="M3 8.500A15 15 0 0 0 15 31l7-11.500H9.500z" fill="#17a05e" />
            <circle cx="16" cy="16" r="7" fill="#fff" />
            <circle cx="16" cy="16" r="5.500" fill="#4a86ee" />
          </Svg>
        </TaskButton>
        <TaskButton label="猎豹浏览器">
          <Svg w={32} h={32}>
            <circle cx="16" cy="16" r="15.500" fill="#ee7a1c" />
            <path d="M12 5c4-3 9-3 13-1 5 4 7 9 6 15-1 4-3 7-6 9 1-5-1-9-5-10-3 1-6 2-7 5l-5 1 1-3-4 1c0-4 1-7 3-9 1-3 2-6 4-8z" fill="#f8e0cc" />
            <path d="M5 20l4-4 4 1 5-1-2 3-4 2-3 1z" fill="#c55a10" />
            <path d="M9 17l1 3 1-3zM13 17l1 3 1-3z" fill="#fff" />
            <path d="M11 11l3 .5" stroke="#8c3c08" strokeWidth="1.500" />
          </Svg>
        </TaskButton>
        <TaskButton label="记事本" state="open">
          <Svg w={32} h={32}>
            <path d="M28 4l3 1-2 23-5 3z" fill="#b08a4a" />
            <path d="M10 4h18l-5 25L1 23z" fill="#8accd9" />
            <path d="M10 4h18l-2 10L5 15z" fill="#c4e6ec" />
            <path d="M1 23l22 6 1-3L3 21z" fill="#5f9fae" />
            <path d="M11 3.500h17" stroke="#666" strokeWidth="2" strokeDasharray="1 1.500" />
          </Svg>
        </TaskButton>
        <TaskButton label="Excel" state="active">
          <Svg w={32} h={30}>
            <path d="M8 1h24v28H8z" fill="#21a366" />
            <path d="M20 1h12v7H20z" fill="#33c481" />
            <path d="M8 8h12v7H8z" fill="#107c41" />
            <path d="M8 15h12v14H8z" fill="#185c37" />
            <path d="M20 15h12v7H20z" fill="#107c41" />
            <path d="M20 22h12v7H20z" fill="#185c37" />
            <path d="M0 7h16v16H0z" fill="#107c41" />
            <path d="M5 11l6 8M11 11l-6 8" stroke="#fff" strokeWidth="2.200" />
          </Svg>
        </TaskButton>
      </div>
      <div className="relative flex h-10 items-center text-white">
        <span className="flex w-6 justify-center"><Svg w={9} h={5}><path d="M0 5h9L4.500 0z" fill="#fff" stroke="#555" strokeWidth=".5" /></Svg></span>
        <span className="flex w-6 justify-center"><Penguin size={17} /></span>
        <span className="flex w-6 justify-center">
          <Svg w={16} h={16}>
            <path d="M1.500 1v14" stroke="#fff" strokeWidth="1.500" />
            <path d="M3 2h5l1 1.500h5V9H8L7 8H3z" stroke="#fff" strokeWidth="1.300" />
            <circle cx="11" cy="11" r="4.500" fill="#d93025" />
            <path d="M9.300 9.300l3.400 3.400M12.700 9.300l-3.400 3.400" stroke="#fff" strokeWidth="1.400" />
          </Svg>
        </span>
        <span className="flex w-6 justify-center">
          <Svg w={16} h={16}>
            <path d="M8.500 2.500h6v12h-6zM10 1h3" stroke="#fff" strokeWidth="1.500" />
            <path d="M2 1v3M5 1v3M3.500 8v7" stroke="#fff" strokeWidth="1.400" />
            <path d="M.5 4h6v3l-1.500 2H2L.5 7z" fill="#fff" />
          </Svg>
        </span>
        <span className="flex w-6 justify-center">
          <Svg w={16} h={14}>
            <path d="M.5 13.500v-3h2v3zM3.500 13.500v-5h2v5zM6.500 13.500v-7h2v7zM9.500 13.500v-10h2v10zM12.500 13.500v-13h2v13z" fill="#fff" />
          </Svg>
        </span>
        <span className="flex w-6 justify-center">
          <Svg w={16} h={15}>
            <path d="M1 5h3l4-4v13l-4-4H1z" fill="#fff" fillOpacity=".5" stroke="#fff" strokeWidth="1.300" />
            <path d="M10 5c1 1.500 1 3.500 0 5M12 3c2 2.500 2 6.500 0 9M14 1.500c2.500 3.500 2.500 8.500 0 12" stroke="#fff" />
          </Svg>
        </span>
        <span className="flex w-8 justify-center text-sm">中</span>
        <span className="flex w-6 justify-center">
          <Svg w={16} h={16}>
            <rect x=".5" y=".5" width="15" height="15" rx="3" fill="#f4511e" transform="rotate(-5 8 8)" />
            <path d="M12 4.500C8 3 4.500 4 4.500 6s7 1.500 7 4-4 3-7.500 1.500" stroke="#fff" strokeWidth="2" />
          </Svg>
        </span>
        <time className="w-[96px] pb-px text-center text-xs leading-[17px]">
          6:57<br />2020/4/23
        </time>
      </div>
    </footer>
  );
}

/* ---------- overlays ---------- */

function ActivationNotice() {
  return (
    <div className="pointer-events-none absolute bottom-[74px] right-[60px] flex w-[283px] items-start gap-[29px] text-[#777]/70">
      <Svg w={25} h={48}>
        <path fillRule="evenodd" d="M12.500 0a12.500 12.500 0 0 1 4.500 24v18l-4 6-4-6V24A12.500 12.500 0 0 1 12.500 0zm0 4A9 9 0 0 0 4 12h17a9 9 0 0 0-8.500-8z" fill="#b0b0b0" />
      </Svg>
      <div className="whitespace-nowrap">
        <p className="text-xl leading-[26px]">激活 Windows</p>
        <p className="pl-1 text-[15px] leading-[22px]">转到“设置”以激活 Windows。</p>
      </div>
    </div>
  );
}

function Watermark() {
  return (
    <svg width="260" height="122" viewBox="1040 616 260 122" className="pointer-events-none absolute bottom-[30px] right-[66px]" aria-hidden="true">
      <g fill="#fff" fillOpacity=".5" stroke="#cdcdcd" strokeWidth="1.500">
        <ellipse cx="1158" cy="635" rx="9" ry="12" />
        <ellipse cx="1180" cy="636" rx="9" ry="12" />
        <ellipse cx="1141" cy="652" rx="9" ry="12" />
        <ellipse cx="1193" cy="657" rx="9" ry="12" />
        <path d="M1168 653c9 0 12 8 18 14 7 7 12 12 11 19-1 9-9 13-17 12-8-1-18-1-26 0-9 1-16-3-17-11-1-8 5-13 11-19 6-7 11-15 20-15z" />
      </g>
      <g fill="#fff" fillOpacity=".65" stroke="#cdcdcd" strokeWidth="1.500" strokeOpacity=".9" fontWeight="700">
        <text x="1048" y="697" fontSize="52" fontFamily="Liberation Sans, sans-serif">Bai</text>
        <text x="1145" y="694" fontSize="40" fontFamily="Liberation Sans, sans-serif">du</text>
        <text x="1205" y="694" fontSize="41" fontFamily="Noto Sans CJK SC, sans-serif">经验</text>
      </g>
      <text x="1050" y="729" fontSize="28" fontFamily="Noto Sans, sans-serif" fill="#fff" fillOpacity=".9" stroke="#b5b5b5" strokeOpacity=".7" strokeWidth="2" paintOrder="stroke">
        jingyan.baidu.com
      </text>
    </svg>
  );
}

export default function App() {
  return (
    <div className="relative flex h-screen flex-col overflow-hidden bg-[#e6e6e6] font-['Noto_Sans','Noto_Sans_CJK_SC',sans-serif]">
      <TitleBar />
      <RibbonTabs />
      <Ribbon />
      <FormulaBar />
      <Sheet />
      <SheetTabs />
      <StatusBar />
      <Taskbar />
      <div className="pointer-events-none absolute left-[795px] top-0 h-[2px] w-[274px] bg-[#0d3a21]/60 blur-[1px]" />
      <ActivationNotice />
      <Watermark />
    </div>
  );
}
